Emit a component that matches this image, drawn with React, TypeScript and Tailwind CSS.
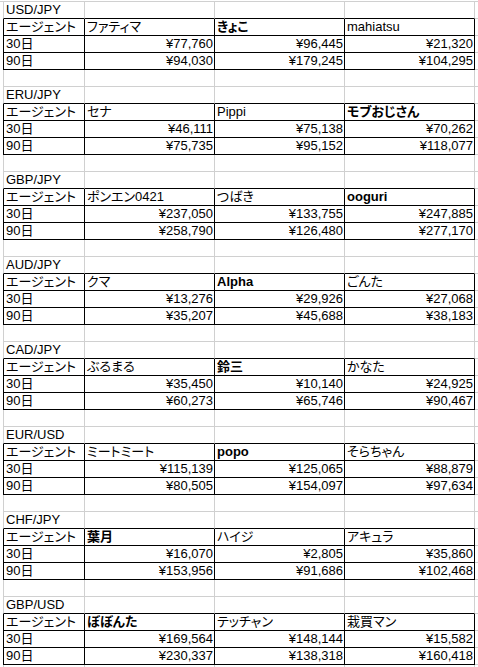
import React from 'react';

type Block = {
  pair: string;
  agents: [string, string, string];
  bold: number;
  d30: [string, string, string];
  d90: [string, string, string];
};

const BLOCKS: Block[] = [
  { pair: 'USD/JPY', agents: ['ファティマ', 'きょこ', 'mahiatsu'], bold: 1, d30: ['¥77,760', '¥96,445', '¥21,320'], d90: ['¥94,030', '¥179,245', '¥104,295'] },
  { pair: 'ERU/JPY', agents: ['セナ', 'Pippi', 'モブおじさん'], bold: 2, d30: ['¥46,111', '¥75,138', '¥70,262'], d90: ['¥75,735', '¥95,152', '¥118,077'] },
  { pair: 'GBP/JPY', agents: ['ポンエン0421', 'つばき', 'ooguri'], bold: 2, d30: ['¥237,050', '¥133,755', '¥247,885'], d90: ['¥258,790', '¥126,480', '¥277,170'] },
  { pair: 'AUD/JPY', agents: ['クマ', 'Alpha', 'ごんた'], bold: 1, d30: ['¥13,276', '¥29,926', '¥27,068'], d90: ['¥35,207', '¥45,688', '¥38,183'] },
  { pair: 'CAD/JPY', agents: ['ぶるまる', '鈴三', 'かなた'], bold: 1, d30: ['¥35,450', '¥10,140', '¥24,925'], d90: ['¥60,273', '¥65,746', '¥90,467'] },
  { pair: 'EUR/USD', agents: ['ミートミート', 'popo', 'そらちゃん'], bold: 1, d30: ['¥115,139', '¥125,065', '¥88,879'], d90: ['¥80,505', '¥154,097', '¥97,634'] },
  { pair: 'CHF/JPY', agents: ['葉月', 'ハイジ', 'アキュラ'], bold: 0, d30: ['¥16,070', '¥2,805', '¥35,860'], d90: ['¥153,956', '¥91,686', '¥102,468'] },
  { pair: 'GBP/USD', agents: ['ぼぼんた', 'テッチャン', '栽買マン'], bold: 0, d30: ['¥169,564', '¥148,144', '¥15,582'], d90: ['¥230,337', '¥138,318', '¥160,418'] },
];

type Kind = 'title' | 'data' | 'blank';

// one spreadsheet row: column A + three agent columns, gridlines as cell borders
function SheetRow({ kind, cells, bold = -1, numeric = false }: { kind: Kind; cells: string[]; bold?: number; numeric?: boolean }) {
  const bottom = kind === 'blank' ? 'border-b-[#d0d0d0]' : 'border-b-black';
  const side = kind === 'data' ? 'border-r-black' : 'border-r-[#d0d0d0]';
  const left = kind === 'data' ? 'border-l-black' : 'border-l-[#d0d0d0]';
  return (
    <div className="flex h-[17px] pl-[3px]">
      {[0, 1, 2, 3].map(i => (
        <div
          key={i}
          className={`h-[17px] shrink-0 overflow-hidden whitespace-nowrap border-b border-r ${bottom} ${side} ${
            i === 0 ? `w-[82px] border-l ${left} pl-[1px]` : 'w-[130px]'
          } ${numeric && i > 0 ? 'pr-[1px] text-right' : 'pl-[2px]'} ${bold === i - 1 && i > 0 ? 'font-bold' : ''}`}>
          {cells[i] ?? ''}
        </div>
      ))}
      <div className="h-[17px] flex-1 border-b border-b-[#d0d0d0]" />
    </div>
  );
}

export default function App() {
  return (
    <div className="h-[667px] w-full overflow-hidden bg-white pt-[1px] font-['Liberation_Sans','Noto_Sans_CJK_JP',sans-serif] text-[13px] leading-[16px] text-black [font-feature-settings:'palt']">
      <div className="border-t border-t-[#d0d0d0]">
        {BLOCKS.map(b => (
          <div key={b.pair}>
            <SheetRow kind="title" cells={[b.pair]} />
            <SheetRow kind="data" cells={['エージェント', ...b.agents]} bold={b.bold} />
            <SheetRow kind="data" cells={['30日', ...b.d30]} numeric />
            <SheetRow kind="data" cells={['90日', ...b.d90]} numeric />
            <SheetRow kind="blank" cells={[]} />
          </div>
        ))}
      </div>
    </div>
  );
}
